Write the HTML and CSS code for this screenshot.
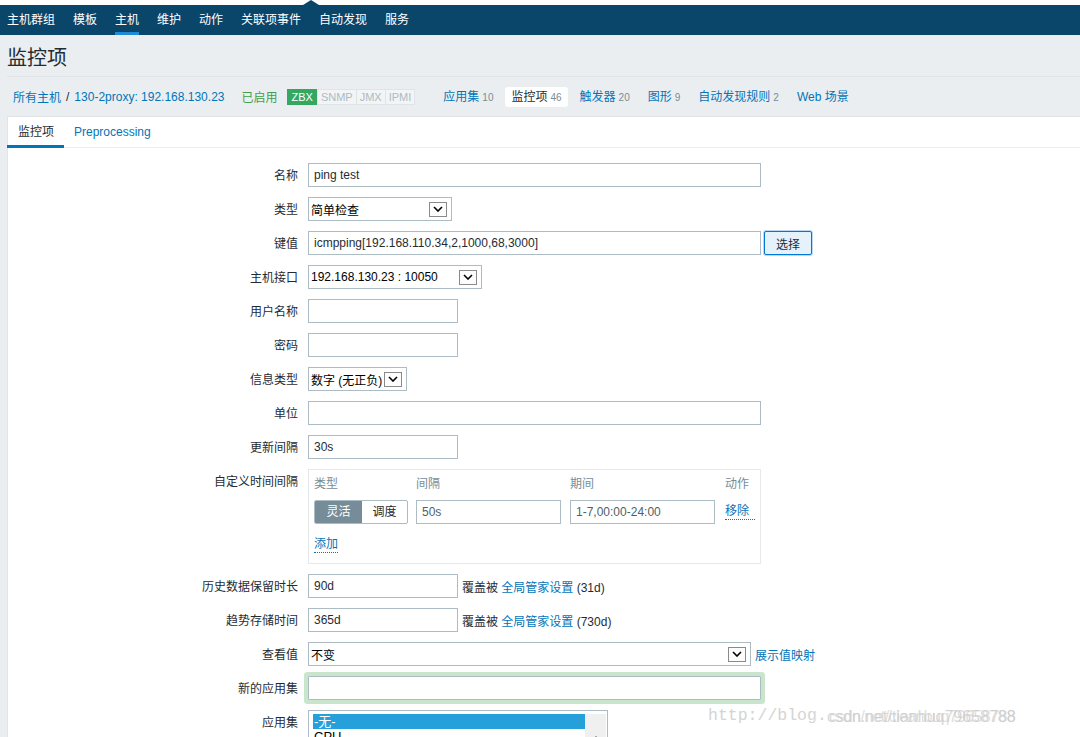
FILE: index.html
```html
<!DOCTYPE html>
<html lang="zh-CN">
<head>
<meta charset="utf-8">
<title>监控项</title>
<link rel="stylesheet" href="styles.css">
</head>
<body>
<div class="strip"><span class="notch"></span></div>
<ul class="topnav">
  <li>主机群组</li>
  <li>模板</li>
  <li class="active">主机</li>
  <li>维护</li>
  <li>动作</li>
  <li>关联项事件</li>
  <li>自动发现</li>
  <li>服务</li>
</ul>
<div class="page">
  <div class="title"><h1>监控项</h1></div>
  <div class="hostnav">
    <a class="link">所有主机</a><span class="sep">/</span><a class="link">130-2proxy: 192.168.130.23</a>
    <span class="green">已启用</span>
    <span class="status"><span class="st on">ZBX</span><span class="st">SNMP</span><span class="st">JMX</span><span class="st">IPMI</span></span>
    <ul class="subnav">
      <li><a class="link">应用集</a><span class="cnt">10</span></li>
      <li class="sel"><span>监控项</span><span class="cnt">46</span></li>
      <li><a class="link">触发器</a><span class="cnt">20</span></li>
      <li><a class="link">图形</a><span class="cnt">9</span></li>
      <li><a class="link">自动发现规则</a><span class="cnt">2</span></li>
      <li><a class="link">Web 场景</a></li>
    </ul>
  </div>
  <div class="panel">
    <ul class="tabs">
      <li class="active">监控项</li>
      <li><a class="link">Preprocessing</a></li>
    </ul>
    <div class="form">
      <label>名称</label>
      <div class="field"><input class="in w453" value="ping test"></div>

      <label>类型</label>
      <div class="field"><div class="select" style="width:144px"><span>简单检查</span><span class="arr"><svg width="10" height="6" viewBox="0 0 10 6"><polyline points="1,1 5,5 9,1" fill="none" stroke="#000" stroke-width="1.6"/></svg></span></div></div>

      <label>键值</label>
      <div class="field"><input class="in w453" value="icmpping[192.168.110.34,2,1000,68,3000]"><button class="btn">选择</button></div>

      <label>主机接口</label>
      <div class="field"><div class="select" style="width:174px"><span>192.168.130.23 : 10050</span><span class="arr"><svg width="10" height="6" viewBox="0 0 10 6"><polyline points="1,1 5,5 9,1" fill="none" stroke="#000" stroke-width="1.6"/></svg></span></div></div>

      <label>用户名称</label>
      <div class="field"><input class="in w150" value=""></div>

      <label>密码</label>
      <div class="field"><input class="in w150" value=""></div>

      <label>信息类型</label>
      <div class="field"><div class="select" style="width:99px"><span>数字 (无正负)</span><span class="arr"><svg width="10" height="6" viewBox="0 0 10 6"><polyline points="1,1 5,5 9,1" fill="none" stroke="#000" stroke-width="1.6"/></svg></span></div></div>

      <label>单位</label>
      <div class="field"><input class="in w453" value=""></div>

      <label>更新间隔</label>
      <div class="field"><input class="in w150" value="30s"></div>

      <label>自定义时间间隔</label>
      <div class="field">
        <div class="intervals">
          <div class="int-grid head">
            <span>类型</span><span>间隔</span><span>期间</span><span>动作</span>
          </div>
          <div class="int-grid row">
            <div class="seg"><span class="on">灵活</span><span>调度</span></div>
            <input class="in w145 grey" value="50s">
            <input class="in w145 grey" value="1-7,00:00-24:00">
            <a class="link dot">移除</a>
          </div>
          <div class="addrow"><a class="link dot">添加</a></div>
        </div>
      </div>

      <label>历史数据保留时长</label>
      <div class="field"><input class="in w150" value="90d"><span class="note">覆盖被 <a class="link">全局管家设置</a> (31d)</span></div>

      <label>趋势存储时间</label>
      <div class="field"><input class="in w150" value="365d"><span class="note">覆盖被 <a class="link">全局管家设置</a> (730d)</span></div>

      <label>查看值</label>
      <div class="field"><div class="select" style="width:443px"><span>不变</span><span class="arr"><svg width="10" height="6" viewBox="0 0 10 6"><polyline points="1,1 5,5 9,1" fill="none" stroke="#000" stroke-width="1.6"/></svg></span></div><a class="link note">展示值映射</a></div>

      <label>新的应用集</label>
      <div class="field"><input class="in w453 glow" value=""></div>

      <label>应用集</label>
      <div class="field">
        <div class="listbox">
          <div class="opt selected">-无-</div>
          <div class="opt">CPU</div>
          <div class="scroll"><span class="up"></span></div>
        </div>
      </div>
    </div>
  </div>
</div>
<div class="wm"><span class="wm1">http://blog.</span><span class="wm2">csdn.net/tianhuq79658788</span><span class="wm3">csdn/net/cleanbuq79658788</span></div>
</body>
</html>
```
FILE: styles.css
```css
* { box-sizing: border-box; }
html, body { margin: 0; height: 737px; overflow: hidden; }
body {
  background: #ebeef0;
  font: 12px "Liberation Sans", "Noto Sans CJK SC", sans-serif;
  color: #1f2c33;
  position: relative;
}
a { text-decoration: none; }
.link { color: #0275b8; }

.strip { height: 5px; background: #fff; position: relative; }
.notch {
  position: absolute; left: 303px; top: 0; width: 0; height: 0;
  border-left: 8px solid transparent; border-right: 8px solid transparent;
  border-bottom: 5px solid #0a466a;
}
.topnav {
  height: 30px; margin: 0; padding: 0 0 0 7px; list-style: none;
  background: #0a466a; display: flex; gap: 18px;
}
.topnav li { color: #fff; line-height: 30px; position: relative; }
.topnav li.active::after {
  content: ""; position: absolute; left: 0; right: 0; bottom: 0; height: 3px; background: #1f8ad6;
}

.page { padding-left: 7px; }
.title { height: 42px; border-bottom: 1px solid #dfe4e7; padding-top: 11px; }
.title h1 { margin: 0; font-size: 20px; line-height: 24px; font-weight: normal; color: #1f2c33; }

.hostnav { height: 39px; display: flex; align-items: center; padding-left: 6px; }
.sep { margin: 0 5px; }
.green { color: #429e47; margin-left: 17px; }
.status { display: flex; margin-left: 9px; }
.st {
  height: 16px; line-height: 14px; padding: 0 3px; font-size: 11px;
  border: 1px solid #dfe4e7; color: #acbbc4; background: #f2f4f5; margin-left: -1px;
}
.st.on { background: #34a863; border-color: #34a863; color: #fff; margin-left: 0; padding: 0 4px; }
.subnav { display: flex; list-style: none; margin: 0 0 0 22px; padding: 0; gap: 6px; }
.subnav li { height: 20px; line-height: 20px; padding: 0 6px; border-radius: 3px; }
.subnav li.sel { background: #fff; }
.cnt { font-size: 10px; color: #768d99; margin-left: 3px; }

.panel { background: #fff; border-top: 1px solid #dfe4e7; border-left: 1px solid #dfe4e7; height: 700px; }
.tabs { display: flex; list-style: none; margin: 0; padding: 0; height: 31px; border-bottom: 1px solid #ebeef0; }
.tabs li { padding: 0 10px; line-height: 30px; position: relative; }
.tabs li.active::after {
  content: ""; position: absolute; left: -1px; right: 0; bottom: -1px; height: 3px; background: #0275b8;
}

.form {
  display: grid; grid-template-columns: 290px 1fr; column-gap: 10px; row-gap: 10px;
  padding-top: 15px;
}
.form label { text-align: right; line-height: 24px; height: 24px; padding-top: 1px; white-space: nowrap; }
.field { display: flex; align-items: center; min-height: 24px; }

.in {
  height: 24px; border: 1px solid #acbbc4; padding: 0 5px; background: #fff;
  font: inherit; color: #1f2c33; outline: none; margin: 0;
}
.w453 { width: 453px; }
.w150 { width: 150px; }
.w145 { width: 145px; }
.in.grey { color: #4f5f69; }
.in.glow { box-shadow: 0 0 0 4px #c9e5cc; border-radius: 1px; }

.btn {
  margin-left: 3px; width: 48px; height: 24px; font: inherit; color: #1f2c33;
  background: #e5f1fb; border: 1px solid #0078d7; border-radius: 2px;
  box-shadow: 0 0 0 1px #b8d8f3; padding: 0;
}

.select {
  height: 24px; border: 1px solid #acbbc4; display: flex; align-items: center;
  justify-content: space-between; padding: 0 4px 0 2px; background: #fff; color: #000;
  white-space: nowrap;
}
.arr {
  width: 18px; height: 15px; border: 1px solid #8a8a8a; background: #fdfdfd;
  display: flex; align-items: center; justify-content: center; flex: none;
}

.intervals { width: 453px; border: 1px solid #e6e9eb; padding: 5px 5px 9px 5px; }
.int-grid { display: grid; grid-template-columns: 102px 154px 155px auto; align-items: center; }
.int-grid.head span { color: #768d99; line-height: 18px; }
.int-grid.row { margin-top: 7px; }
.seg {
  display: flex; width: 94px; height: 24px; border: 1px solid #acbbc4; border-radius: 2px; overflow: hidden;
}
.seg span { line-height: 22px; text-align: center; }
.seg span:first-child { width: 47px; }
.seg span:last-child { flex: 1; }
.seg span.on { background: #768d99; color: #fff; }
.dot { border-bottom: 1px dotted #0275b8; line-height: 15px; }
.addrow { margin-top: 12px; height: 18px; display: flex; align-items: center; }

.note { margin-left: 4px; }

.listbox {
  width: 300px; height: 80px; border: 1px solid #acbbc4; padding: 3px 0 0 4px; position: relative;
  font-size: 13px; color: #000;
}
.opt { line-height: 15px; width: 272px; padding-left: 1px; }
.opt.selected { background: #26a0da; color: #fff; }
.scroll { position: absolute; left: 276px; top: 3px; width: 21px; bottom: 0; background: #f0f0f0; }
.up {
  position: absolute; left: 6px; top: 22px; width: 0; height: 0;
  border-left: 5px solid transparent; border-right: 5px solid transparent; border-bottom: 5px solid #606060;
}

.wm { position: absolute; left: 708px; top: 704px; height: 24px; width: 372px; pointer-events: none; }
.wm1 { font: 16.5px/24px "Liberation Mono", monospace; color: #d4d4d4; }
.wm2, .wm3 { position: absolute; left: 119px; top: 1px; font: 16px/24px "Liberation Sans", sans-serif; color: #d8d8d8; }
.wm3 { left: 121px; color: rgba(200,200,200,0.6); letter-spacing: -0.6px; }
```
